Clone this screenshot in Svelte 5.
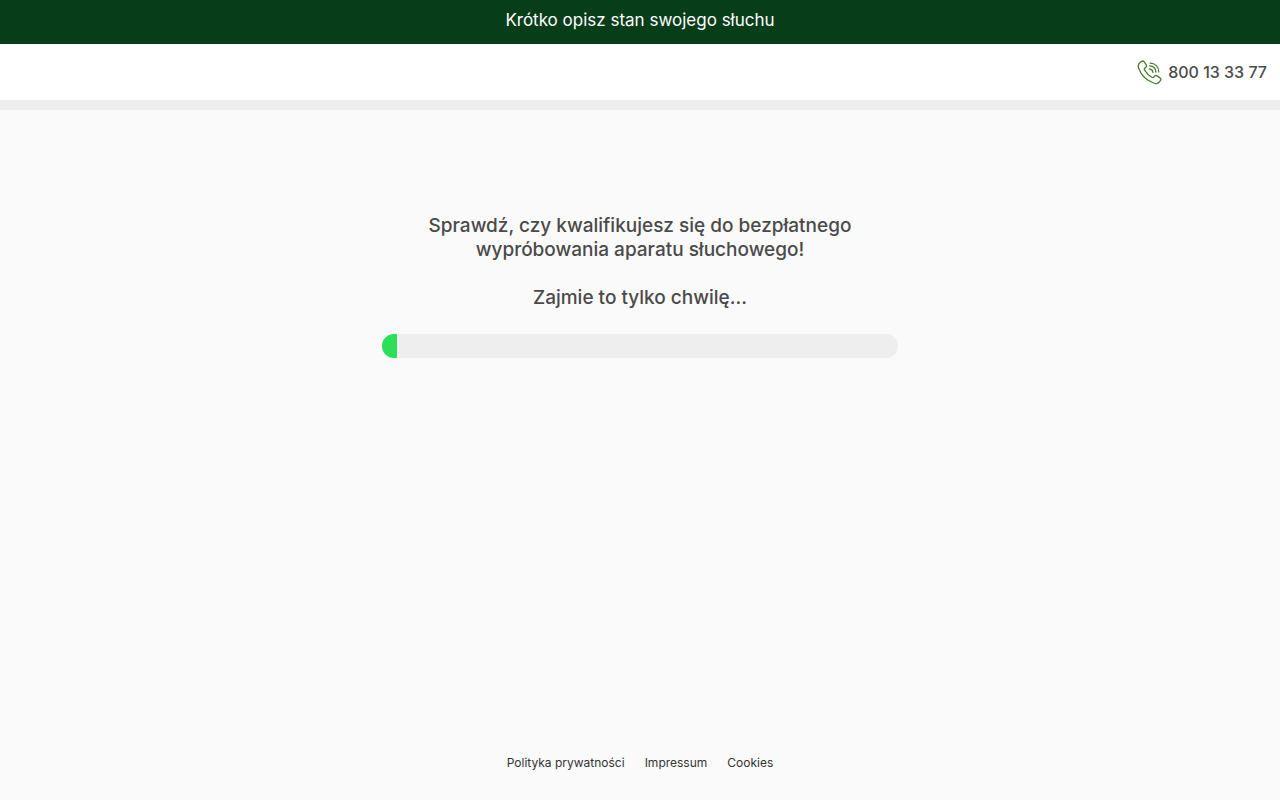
<script lang="ts">
	const phone = '800 13 33 77';

	const links = [
		{ label: 'Polityka prywatności', href: '#privacy' },
		{ label: 'Impressum', href: '#impressum' },
		{ label: 'Cookies', href: '#cookies' },
	];

	let progress = $state(3);
</script>

<svelte:head>
	<title>Krótko opisz stan swojego słuchu</title>
</svelte:head>

<div class="page">
	<div class="banner">Krótko opisz stan swojego słuchu</div>

	<header class="header">
		<a class="phone" href="tel:{phone.replaceAll(' ', '')}">
			<svg class="phone-icon" viewBox="0 0 26 26" aria-hidden="true">
				<path d="M3.2 2.6 L4.8 1.4 C5.8 .8 6.8 1 7.5 1.9 L9.6 5 C10.2 6 10 7 9.1 7.7 L8.1 8.5 C7.4 9.1 7.4 9.8 7.9 10.6 C9.8 13.7 12.2 16.1 15.3 18 C16.1 18.5 16.8 18.4 17.4 17.7 L18.2 16.8 C18.9 16 19.9 15.9 20.8 16.5 L24 18.6 C24.9 19.3 25.1 20.2 24.5 21.1 L23.3 22.8 C22.2 24.4 20.3 24.9 18 24.2 C10.5 21.8 4.2 15.5 1.6 8.4 C.8 6 1.3 4 3.2 2.6 Z" />
				<path d="M13.6 3.2 C18.8 3.2 22.6 7.2 22.7 12.4 M13.2 6.2 C17 6.4 19.5 9 19.7 12.6 M12.8 9.3 C15.1 9.5 16.4 10.8 16.7 13" />
			</svg>
			<span>{phone}</span>
		</a>
	</header>

	<main class="content">
		<h1>Sprawdź, czy kwalifikujesz się do bezpłatnego wypróbowania aparatu słuchowego!</h1>
		<p class="hint">Zajmie to tylko chwilę...</p>
		<div
			class="track"
			role="progressbar"
			aria-label="Postęp"
			aria-valuemin="0"
			aria-valuemax="100"
			aria-valuenow={progress}
		>
			<div class="fill" style="width: {progress}%"></div>
		</div>
	</main>

	<footer class="footer">
		{#each links as link}
			<a href={link.href}>{link.label}</a>
		{/each}
	</footer>
</div>

<style>
	:global(body) {
		background: #fafafa;
	}

	.page {
		display: flex;
		flex-direction: column;
		min-height: 100vh;
		font-family: Inter, 'Liberation Sans', sans-serif;
		color: #4a4a4a;
	}

	.banner {
		padding: 8px 12px 12px;
		background: #083d19;
		color: #fff;
		font-size: 17px;
		line-height: 24px;
		text-align: center;
	}

	.header {
		display: flex;
		justify-content: flex-end;
		padding: 16px 13px 15px;
		background: #fff;
		border-bottom: 10px solid #eee;
	}

	.phone {
		display: flex;
		align-items: center;
		gap: 6px;
		color: inherit;
		font-size: 16px;
		font-weight: 500;
		line-height: 25px;
		text-decoration: none;
	}

	.phone-icon {
		width: 25px;
		height: 25px;
		fill: none;
		stroke: #4b7a2b;
		stroke-width: 1.3;
		stroke-linecap: round;
		stroke-linejoin: round;
	}

	.content {
		flex: 1;
		box-sizing: border-box;
		width: 100%;
		max-width: 540px;
		margin: 0 auto;
		padding: 104px 12px 24px;
		text-align: center;
	}

	h1,
	.hint {
		margin: 0 0 24px;
		font-size: 19px;
		font-weight: 500;
		line-height: 24px;
	}

	h1 {
		padding: 0 32px;
	}

	.track {
		height: 24px;
		overflow: hidden;
		background: #eee;
		border-radius: 12px;
	}

	.fill {
		height: 100%;
		background: #2cde58;
	}

	.footer {
		display: flex;
		justify-content: center;
		gap: 20px;
		padding: 0 12px 28px;
		font-size: 12px;
		line-height: 18px;
	}

	.footer a {
		color: #333;
		text-decoration: none;
	}
</style>
